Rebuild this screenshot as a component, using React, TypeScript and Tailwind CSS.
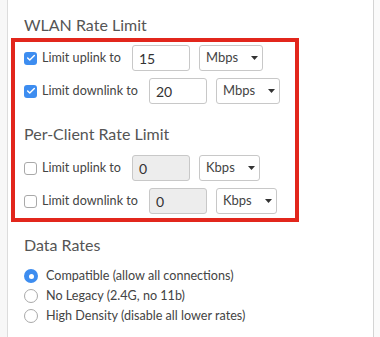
import { Check } from 'lucide-react';

function Box({ checked }: { checked: boolean }) {
  return checked ? (
    <span className="w-[13px] h-[13px] rounded-[3px] bg-[#3d8df0] flex items-center justify-center shrink-0">
      <Check size={10} strokeWidth={3.5} className="text-white" />
    </span>
  ) : (
    <span className="w-[13px] h-[13px] rounded-[3px] bg-white border border-[#a9a9a9] shrink-0" />
  );
}

function Radio({ on }: { on: boolean }) {
  return on ? (
    <span className="w-[14px] h-[14px] rounded-full bg-[#3d8df0] flex items-center justify-center shrink-0">
      <span className="w-[5px] h-[5px] rounded-full bg-white" />
    </span>
  ) : (
    <span className="w-[14px] h-[14px] rounded-full bg-white border border-[#a9a9a9] shrink-0" />
  );
}

function RateRow({ checked, label, value, unit }: { checked: boolean; label: string; value: string; unit: string }) {
  return (
    <div className="flex items-center h-[26px]">
      <Box checked={checked} />
      <span className="ml-[5px] text-[12.6px] text-[#444]">{label}</span>
      <div
        className={`ml-[11px] w-[58px] h-[26px] border border-[#c8c8c8] rounded-[3px] flex items-center pl-[6px] text-[14px] text-[#333] ${
          checked ? 'bg-white' : 'bg-[#ededed]'
        }`}
      >
        {value}
      </div>
      <div className="ml-[9px] h-[26px] border border-[#c8c8c8] rounded-[3px] bg-white flex items-center pl-[6px] pr-[4px] gap-[13px] text-[13px] text-[#444]">
        <span>{unit}</span>
        <svg width="7" height="4" viewBox="0 0 7 4">
          <path d="M0 0h7L3.5 4z" fill="#333" />
        </svg>
      </div>
    </div>
  );
}

export default function App() {
  return (
    <div className="flex h-[337px] bg-white font-['Lato','Liberation_Sans',sans-serif]">
      <div className="w-[8px] bg-[#f7f7f7] border-r border-[#dcdcdc] shrink-0" />
      <div className="w-[366px] border-r border-[#d4d4d4] shrink-0 pt-[15px]">
        <h2 className="ml-[16px] text-[16px] leading-[20px] text-[#555]">WLAN Rate Limit</h2>
        <div className="mt-[3px] ml-[3px] w-[288px] border-4 border-[#e2261c] pt-[3px] pb-[4px] pl-[9px]">
          <div className="flex flex-col gap-[7px]">
            <RateRow checked label="Limit uplink to" value="15" unit="Mbps" />
            <RateRow checked label="Limit downlink to" value="20" unit="Mbps" />
          </div>
          <h2 className="mt-[20px] text-[16px] leading-[20px] text-[#555]">Per-Client Rate Limit</h2>
          <div className="mt-[11px] flex flex-col gap-[7px]">
            <RateRow checked={false} label="Limit uplink to" value="0" unit="Kbps" />
            <RateRow checked={false} label="Limit downlink to" value="0" unit="Kbps" />
          </div>
        </div>
        <h2 className="mt-[13px] ml-[16px] text-[16px] leading-[20px] text-[#555]">Data Rates</h2>
        <div className="mt-[11px] ml-[16px] flex flex-col text-[12.6px] text-[#444]">
          <div className="flex items-center h-[20px] gap-[8px]">
            <Radio on />
            <span>Compatible (allow all connections)</span>
          </div>
          <div className="flex items-center h-[20px] gap-[8px]">
            <Radio on={false} />
            <span>No Legacy (2.4G, no 11b)</span>
          </div>
          <div className="flex items-center h-[20px] gap-[8px]">
            <Radio on={false} />
            <span>High Density (disable all lower rates)</span>
          </div>
        </div>
      </div>
      <div className="flex-1 bg-[#fafafa]" />
    </div>
  );
}
